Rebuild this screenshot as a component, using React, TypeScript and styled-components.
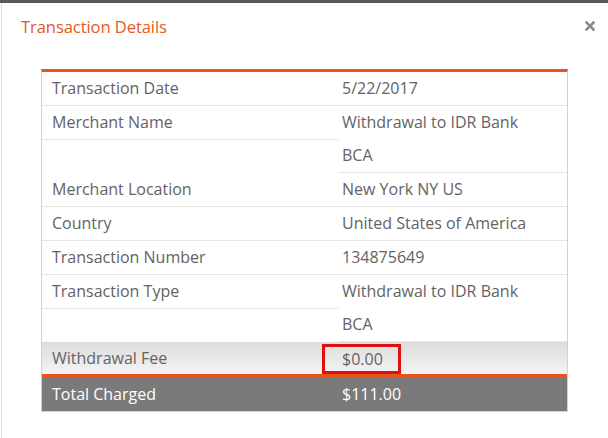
import styled, { createGlobalStyle } from 'styled-components';

const GlobalStyle = createGlobalStyle`
  html, body {
    margin: 0;
    padding: 0;
    background: #ffffff;
    font-family: "Open Sans", "Liberation Sans", sans-serif;
  }
`;

const TopBar = styled.div`
  height: 3px;
  background: #5a5a5a;
`;

const Modal = styled.div`
  border-left: 1px solid #dcdcdc;
  margin-left: 1px;
  height: 435px;
  box-sizing: border-box;
`;

const Header = styled.div`
  display: flex;
  align-items: center;
  justify-content: space-between;
  padding: 12px 13px 1px 19px;
  height: 22px;
`;

const Title = styled.h4`
  margin: 0;
  font-size: 16.6px;
  font-weight: 400;
  color: #e55a1c;
  letter-spacing: -0.1px;
`;

const CloseButton = styled.button`
  border: 0;
  background: none;
  padding: 0;
  display: flex;
  cursor: pointer;
`;

const Body = styled.div`
  padding: 31px 40px 0 39px;
`;

const Table = styled.div`
  border: 1px solid #d2d2d2;
  border-top: 3px solid #e8541c;
  color: #636363;
  font-size: 16px;
`;

const Row = styled.div`
  display: grid;
  grid-template-columns: 296px 1fr;
  align-items: start;
`;

const Label = styled.div`
  padding-left: 10px;
  line-height: 33px;
  border-bottom: 1px solid #e6e6e6;
`;

const Value = styled.div`
  padding-left: 4px;
  line-height: 33px;
  border-bottom: 1px solid #e6e6e6;
  align-self: stretch;
`;

const FeeRow = styled.div`
  display: grid;
  grid-template-columns: 296px 1fr;
  height: 32px;
  align-items: center;
  background: linear-gradient(#dcdcdc, #f4f4f4);
  border-bottom: 4px solid #e8541c;
`;

const FeeLabel = styled.div`
  padding-left: 10px;
`;

const FeeValue = styled.div`
  align-self: end;
  display: flex;
`;

const Highlight = styled.span`
  display: inline-block;
  box-sizing: border-box;
  width: 79px;
  height: 30px;
  line-height: 24px;
  margin-left: -16px;
  padding-left: 17px;
  border: 3px solid #e01010;
`;

const TotalRow = styled.div`
  display: grid;
  grid-template-columns: 296px 1fr;
  line-height: 33px;
  background: #7a7a7a;
  color: #ffffff;
`;

const TotalLabel = styled.div`
  padding-left: 10px;
`;

const TotalValue = styled.div`
  padding-left: 4px;
`;

const rows = [
  { label: 'Transaction Date', value: ['5/22/2017'] },
  { label: 'Merchant Name', value: ['Withdrawal to IDR Bank', 'BCA'] },
  { label: 'Merchant Location', value: ['New York NY US'] },
  { label: 'Country', value: ['United States of America'] },
  { label: 'Transaction Number', value: ['134875649'] },
  { label: 'Transaction Type', value: ['Withdrawal to IDR Bank', 'BCA'] },
];

const App = () => {
  return (
    <>
      <GlobalStyle />
      <TopBar />
      <Modal>
        <Header>
          <Title>Transaction Details</Title>
          <CloseButton aria-label="Close">
            <svg width="10" height="10" viewBox="0 0 10 10">
              <path d="M1.5 1.5 L8.5 8.5 M8.5 1.5 L1.5 8.5" stroke="#8a8a8a" strokeWidth="2.6" strokeLinecap="square" />
            </svg>
          </CloseButton>
        </Header>
        <Body>
          <Table>
            {rows.map((row) => (
              <Row key={row.label}>
                <Label>{row.label}</Label>
                <Value>
                  {row.value.map((line) => (
                    <div key={line}>{line}</div>
                  ))}
                </Value>
              </Row>
            ))}
            <FeeRow>
              <FeeLabel>Withdrawal Fee</FeeLabel>
              <FeeValue>
                <Highlight>$0.00</Highlight>
              </FeeValue>
            </FeeRow>
            <TotalRow>
              <TotalLabel>Total Charged</TotalLabel>
              <TotalValue>$111.00</TotalValue>
            </TotalRow>
          </Table>
        </Body>
      </Modal>
    </>
  );
};

export default App;
